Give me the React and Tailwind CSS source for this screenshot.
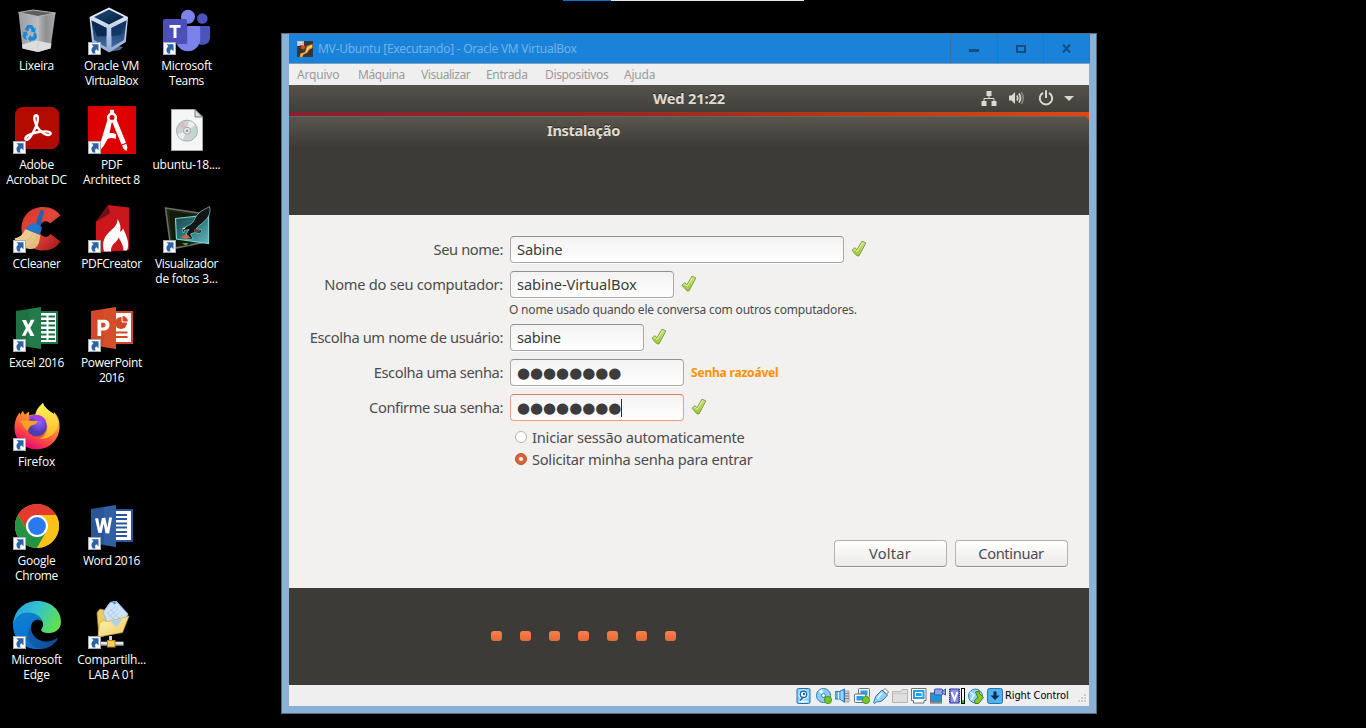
import React from "react";

/* ---------- desktop icons ---------- */

function Svg({ children, size = 48, box = 48, className = "" }) {
  return (
    <svg width={size} height={size} viewBox={`0 0 ${box} ${box}`} fill="none" className={`shrink-0 ${className}`}>
      {children}
    </svg>
  );
}

function Shortcut() {
  return (
    <g>
      <rect x="0" y="35" width="13" height="13" fill="#a7abb0" />
      <rect x="1" y="36" width="11" height="11" fill="#f6f8fa" />
      <path d="M3.500 37.300h7v7l-2.200-2c-1.300.8-1.500 2.200-.8 4.200H4.800c-2.100-3-1.500-5.500.7-7.200z" fill="#2c62a6" />
    </g>
  );
}

function BinIcon() {
  return (
    <Svg>
      <defs>
        <linearGradient id="bin" x1="0" x2="1">
          <stop offset="0" stopColor="#9b9d9f" /><stop offset=".5" stopColor="#b9bbbd" /><stop offset=".75" stopColor="#8d8f91" /><stop offset="1" stopColor="#a8aaac" />
        </linearGradient>
      </defs>
      <path d="M5.500 5.500 25 8.500 42.500 6 37.500 41.500 25 45 9.500 41.500z" fill="url(#bin)" />
      <path d="M5.500 5.500 20 3l22.500 3L25 9.500z" fill="#5d5f61" stroke="#b4b6b8" strokeWidth="1" />
      <path d="M9 37.500 23 33.500l15.500 3-1 5L25 45 9.500 41.500z" fill="#dcddde" />
      <path d="M25 9.500V45" stroke="#c8cacc" strokeWidth=".7" />
      <g fill="#1489dd">
        <path d="m11.500 22.500 3-4.500h4.500l2.500 3.500 1.300-.7-.8 5-4.500-1.500 1.300-.9-2-2.600-2 3.700z" />
        <path d="m20.500 26.500 2.500-1 1 5-2.500 3H18l-.2 1.500-3-3.500 3-3.500.2 1.800h2.500z" />
        <path d="m9.500 25 4-.5 1.500 3.800-1.300-.3-1 2 1.300 3-3-1-1.500-3.500 1-2.500z" />
      </g>
    </Svg>
  );
}

function VirtualBoxIcon() {
  return (
    <Svg>
      <defs>
        <linearGradient id="vb1" x1="0" y1="0" x2="1" y2="1"><stop stopColor="#1d4f86" /><stop offset="1" stopColor="#07182f" /></linearGradient>
        <linearGradient id="vb2" x1="0" y1="0" x2="0" y2="1"><stop stopColor="#eef5fd" /><stop offset="1" stopColor="#8ea9d0" /></linearGradient>
        <linearGradient id="vb3" x1="0" y1="0" x2="0" y2="1"><stop stopColor="#0d2c56" /><stop offset="1" stopColor="#426da5" /></linearGradient>
      </defs>
      <path d="M14 41l7 4 11-2 3-3-14-3z" fill="#4e6488" />
      <path d="M21 .5 40 10 37.800 35 21 45.500 4 35 1.500 10z" fill="url(#vb2)" />
      <path d="M21 2.500 36 10 21 17.500 6 10z" fill="url(#vb1)" />
      <path d="M3.500 13.500 18.500 21v19.500L6 33z" fill="url(#vb3)" />
      <path d="M38.500 13.500 23.500 21v19.500L36 33z" fill="url(#vb3)" />
      <path d="M3.500 13.500 18.500 21l-.2 8L9 29.500z" fill="#0b2850" />
      <path d="M38.500 13.500 23.500 21v8l9-1z" fill="#123765" />
      <Shortcut />
    </Svg>
  );
}

function TeamsIcon() {
  return (
    <Svg>
      <circle cx="39.300" cy="11.500" r="5.300" fill="#4a52bd" />
      <path d="M33 19h12.500c1 0 1.600.6 1.600 1.600V31a7.500 7.500 0 0 1-14 3z" fill="#4b53bc" />
      <circle cx="25" cy="9.800" r="7" fill="#7b83eb" />
      <path d="M13 19h22.500c1 0 1.700.8 1.700 1.700V33a12.300 12.300 0 0 1-24.500 0z" fill="#7b83eb" />
      <path d="M13 19h11.500v18H13z" fill="#5a61bd" opacity=".6" />
      <rect y="12" width="24" height="25" rx="1.700" fill="#4b4fb7" />
      <path d="M6.500 18h11v2.700h-4V31h-3V20.700h-4z" fill="#fff" />
      <Shortcut />
    </Svg>
  );
}

function AcrobatIcon() {
  return (
    <Svg>
      <rect x="2" y="1" width="44" height="42" rx="7.500" fill="#b30b00" />
      <path d="M23 9.300c2.500 0 2.500 4.500.6 9.500-2 5.300-5 11.500-8.200 14.200-1.700 1.500-3.600.7-3-.9.9-2.500 7.400-5.200 13.200-6.100 5.700-.9 11.400-.9 12 1.200.5 1.800-2.600 2.300-5.100 1.200-4-1.800-8-6.400-9.700-10.400-1.600-3.700-2.300-8.700.2-8.700z" stroke="#fff" strokeWidth="2.400" />
      <Shortcut />
    </Svg>
  );
}

function ArchitectIcon() {
  return (
    <Svg>
      <rect width="48" height="48" fill="#de0000" />
      <rect x="22" y="3.800" width="4" height="5" fill="#fff" />
      <circle cx="24" cy="11.500" r="3.800" stroke="#fff" strokeWidth="2.600" />
      <path d="m19.500 13.500 4.300 2.500L21.500 27c2.500-.3 5 .2 6.500 1v5c-3-1.500-6-1.200-8.200-.3L16 39.500l-4 5-.7-.3.700-6z" fill="#fff" />
      <path d="m28.500 13.500-4.300 2.500L33.500 38.500l4.500-1.800z" fill="#fff" />
      <path d="m34 39.500 4.300-1.700 1 3.500-.8 3.700-2.800-2z" fill="#fff" />
      <Shortcut />
    </Svg>
  );
}

function IsoIcon() {
  return (
    <Svg>
      <path d="M8.500 3.500H32l7.500 7.500v33.500h-31z" fill="#f5f6f6" stroke="#a5a7a9" />
      <path d="M32 3.500V11h7.500z" fill="#d8dadb" stroke="#77797b" />
      <circle cx="24" cy="24.700" r="10.500" fill="#cfd2d3" stroke="#a9acad" />
      <path d="m24 24.700-9-5a10 10 0 0 1 5-4.200z" fill="#d9bccb" />
      <path d="m24 24.700 9.500-2a10 10 0 0 1-.7 6.500z" fill="#b5dfc4" />
      <path d="m24 24.700 2-10a10 10 0 0 1 6 4z" fill="#eef0f0" />
      <path d="m24 24.700-4 9a10 10 0 0 1-5.500-5.500z" fill="#eceeee" />
      <circle cx="24" cy="24.700" r="3.500" fill="#e9ebeb" stroke="#a2a5a7" />
      <circle cx="24" cy="24.700" r="1.300" fill="#8f9294" />
    </Svg>
  );
}

function CCleanerIcon() {
  return (
    <Svg>
      <defs>
        <linearGradient id="cc" x1="0" y1="0" x2="1" y2="1"><stop stopColor="#d8342c" /><stop offset=".5" stopColor="#e0483a" /><stop offset="1" stopColor="#a31218" /></linearGradient>
        <linearGradient id="ccb" x1="0" y1="0" x2="1" y2="1"><stop stopColor="#f7e0b0" /><stop offset="1" stopColor="#e2b36c" /></linearGradient>
      </defs>
      <path d="M47.500 10.500 37 18.500c-2.500-3-6.500-3-9 .5-2.300 3.500-2 9 1 11.500 2.700 2.200 6 1.700 8.500-1.500l10 7.500c-4 6-10 9-17.500 9C17 45.500 8.500 35.500 8.500 23.500S17 2 30 2c8 0 13.500 3 17.500 8.500z" fill="url(#cc)" />
      <path d="M27 6.500c.7-2.500 4.200-1.700 3.800.8L27 22l-5-1z" fill="#1766b4" />
      <path d="M17 19.500c.7-1 2-1.500 3-1.200l7 2.500c1.500.7 2 2.200 1.600 3.700l-1.800 5.300-14.800-5z" fill="#2477c8" />
      <path d="m12.500 24.300 14.800 6-1 6c-1.500 6-5 8-9.300 7.700C9 43.300 4 40 1.500 33.500c5-1 8.500-4 11-9.200z" fill="url(#ccb)" />
      <path d="M6 33.500c4-1 7-3.500 9-7M10 38c5-2 8-5 10-10M17 43c4-3 6-7 7.500-13" stroke="#d5ab6b" strokeWidth=".6" />
      <Shortcut />
    </Svg>
  );
}

function PdfCreatorIcon() {
  return (
    <Svg>
      <path d="M20 0 41 2.500V45L8 47.500V17z" fill="#c8171d" />
      <path d="M20 0 22 8.500 8 17z" fill="#6f1013" />
      <path d="M22 8.500 8 17v30.500L41 45V20z" fill="#cc161c" />
      <path d="M16 46.500c-2.500-9 0-15.500 7.500-21.500 4.500-4 6-7 6-11 3 4.500 3.700 8.500 2.500 12.500 1.500-.3 2.500-1.300 3-3 4 8.500 7 15.500 4 22h-3.500c0-5-2.500-9-5-13-1 3-2.500 4-4.500 6-2.300 2.300-3.200 5-3 8z" fill="#fff" />
      <Shortcut />
    </Svg>
  );
}

function PhotoViewerIcon() {
  return (
    <Svg>
      <defs>
        <linearGradient id="pv" x1="0" y1="0" x2="1" y2="1"><stop stopColor="#1d4247" /><stop offset=".5" stopColor="#2e777f" /><stop offset="1" stopColor="#68b6bb" /></linearGradient>
      </defs>
      <path d="M2.500 3 42 9v28L8 44z" fill="#22280f" stroke="#6b6e70" strokeWidth="1.600" />
      <path d="M6 6 30 10 27 40 10 41z" fill="#131a09" />
      <path d="M19 38h7l-3.500 2.500z" fill="#64a514" />
      <path d="m12.500 13.500 33-3.500v28.500l-32-4.500z" fill="url(#pv)" stroke="#73d3da" strokeWidth="1.200" />
      <path d="M46.500 1.500c1.300 5 .2 9-3.500 13-3 3.300-5.500 5-8 7l-2 2.500 6 1-1.500 3.500-6-1-4 1.500 2.500 5-7 .5 2.500-3.500-2.500-2 3-4.500-4.500 1-1 2.500-1.500-3 3.500-3c5-2.500 7-3.500 9-7.500C34 8 40 5 44 3z" fill="#161513" stroke="#7adbe0" strokeWidth=".7" />
      <path d="m31 24 6.500 1-1 2.500-5.500-.5z" fill="#5f4a3a" />
      <path d="m17 33 6-4 5 4-5 1z" fill="#b96c4b" />
      <path d="m19 23 4-.5-2 2z" fill="#efe8d8" />
      <Shortcut />
    </Svg>
  );
}

function OfficePanel({ color, dark, letter }) {
  return (
    <>
      <path d="M3 7 28 3v42L3 41z" fill={color} />
      <path d="M16 5 28 3v42l-12-2z" fill={dark} opacity=".35" />
      {letter}
      <Shortcut />
    </>
  );
}

function ExcelIcon() {
  return (
    <Svg>
      <path d="M27 8h17v31H27z" fill="#fff" stroke="#207245" strokeWidth="2" />
      <path d="M28 12.500h5.500M28 17h5.500M28 21.500h5.500M28 26h5.500M28 30.500h5.500M28 35h5.500M35.500 12.500H42M35.500 17H42M35.500 21.500H42M35.500 26H42M35.500 30.500H42M35.500 35H42" stroke="#207245" strokeWidth="2" />
      <OfficePanel color="#207245" dark="#2b8a55" letter={<path d="M9 16h4l2.300 5 2.500-5.300h3.900l-4.400 8.200L21.500 32h-4l-2.600-5.200-2.400 5H8.800l4.100-7.800z" fill="#fff" />} />
    </Svg>
  );
}

function PowerPointIcon() {
  return (
    <Svg>
      <path d="M27 8h17v31H27z" fill="#fff" stroke="#d24726" strokeWidth="2" />
      <circle cx="33" cy="19" r="6" fill="#d24726" />
      <path d="M34 11.500V18h6.500a6.500 6.500 0 0 0-6.500-6.500z" fill="#d24726" stroke="#fff" />
      <path d="M28 28.500h11.500M28 33h11.500" stroke="#d24726" strokeWidth="2" />
      <OfficePanel color="#d24726" dark="#dc5b33" letter={<path fillRule="evenodd" d="M9.500 15.800h6.300c3.800 0 5.700 2 5.700 5.100 0 3.600-2.600 5.600-6.300 5.500h-2V32H9.500zm3.700 3v4.700h1.700c1.800 0 2.700-.8 2.700-2.400 0-1.500-.9-2.300-2.600-2.300z" fill="#fff" />} />
    </Svg>
  );
}

function WordIcon() {
  return (
    <Svg>
      <path d="M27 8h17v31H27z" fill="#fff" stroke="#2a5699" strokeWidth="2" />
      <path d="M28 13h11M28 17h11M28 21.500h11M28 25.500h11M28 30h11M28 34h11" stroke="#2a5699" strokeWidth="2" />
      <OfficePanel color="#2a5699" dark="#3f6fb5" letter={<path d="m7 16.500 3.200-.2 1.700 9.500 2-9.800 3.400-.2 2.100 10 1.700-10.200 3-.2-3 16-3.500-.2-2-9.500-2 9.300-3.300-.2z" fill="#fff" />} />
    </Svg>
  );
}

function FirefoxIcon() {
  return (
    <Svg>
      <defs>
        <linearGradient id="ff" x1=".8" y1="0" x2=".3" y2="1"><stop stopColor="#fff34f" /><stop offset=".35" stopColor="#ffa52b" /><stop offset=".7" stopColor="#ff4a40" /><stop offset="1" stopColor="#e5007d" /></linearGradient>
        <linearGradient id="ffy" x1=".5" y1="0" x2=".5" y2="1"><stop stopColor="#fff45a" /><stop offset="1" stopColor="#ffb42b" /></linearGradient>
        <radialGradient id="ffp" cx=".6" cy=".3"><stop stopColor="#9a5cff" /><stop offset=".6" stopColor="#7048d8" /><stop offset="1" stopColor="#4a3fa8" /></radialGradient>
      </defs>
      <path d="M10 7.500c.5 2 1 3 2 4l4-3v4c2-1 4-1 6-1L30 0c1 4 5 7.500 9 10l2 1c0-1-.3-2-.5-2.500C45 13 47 18 46.500 25c-.7 12-10 21.300-22.500 21.300S1.500 37.500 1.500 25C1.500 18 4 12 7 9.500V12z" fill="url(#ff)" />
      <path d="M30 0c-5 4-7.500 8-7.500 12 7 0 12 5 12 12 0 5-3 10-8 12 10 0 18-6 19-16-1-5-2.500-6-6-10-4-2.500-8.500-6-9.500-10z" fill="url(#ffy)" />
      <circle cx="23.700" cy="23.300" r="10.200" fill="url(#ffp)" />
      <path d="M15 15c2-3 8-4 12-2.500 3 1 6 4 6 6-3-2-4-2-6-2z" fill="#a63ee0" />
      <path d="M7 18c4-1 9-1 11.500 0h6c.5 2-2.500 3.500-6 4.500-1.500 1-3.500 3-3.500 5.500C11 26 10 21 7 18z" fill="#ffa01e" />
      <Shortcut />
    </Svg>
  );
}

function ChromeIcon() {
  return (
    <Svg>
      <circle cx="24" cy="24" r="22" fill="#fbc116" />
      <path d="M4.950 13A22 22 0 0 1 43.050 13H24L14.500 29.500z" fill="#e33b2e" />
      <path d="M4.950 13A22 22 0 0 0 24 46l9.500-16.500L14.500 29.500z" fill="#229342" />
      <path d="M33.500 29.500 24 46A22 22 0 0 0 43.050 13H24z" fill="#fbc116" />
      <circle cx="24" cy="24" r="11" fill="#fff" />
      <circle cx="24" cy="24" r="8.900" fill="#2a79f0" />
      <Shortcut />
    </Svg>
  );
}

function EdgeIcon() {
  return (
    <Svg>
      <defs>
        <linearGradient id="e1" x1="0" y1=".2" x2="1" y2=".6"><stop stopColor="#2aa0e0" /><stop offset=".45" stopColor="#33c3cf" /><stop offset="1" stopColor="#62e04e" /></linearGradient>
        <linearGradient id="e2" x1=".2" y1="0" x2=".5" y2="1"><stop stopColor="#0d80d0" /><stop offset="1" stopColor="#0a70cc" /></linearGradient>
        <linearGradient id="e3" x1="0" y1="0" x2="1" y2="0"><stop stopColor="#1160b2" /><stop offset="1" stopColor="#0b4a94" /></linearGradient>
      </defs>
      <path d="M0 24C1 9 11 0 24.500 0 38 0 48 9.500 48 20.500 48 28 42.500 32 36.500 32c-5.500 0-9.500-1.500-8-4 3-4 1.500-8.500-2-11C20 12 6 12 0 24z" fill="url(#e1)" />
      <path d="M0 24c1.500-8 8-12.500 15-12.500 7.500 0 13 4 14.500 9-5-3.500-10.500-1.500-11.500 5-1.500 10 5 20.500 13 21.500-3 1-5.500 1-7 1C10.500 48 0 37.500 0 24z" fill="url(#e2)" />
      <path d="M18 25c-1 9 7 16 16.500 15.500 4-.2 7-1.800 9-3.200.9-.6 1.700.2 1 1.200C41.500 43.500 35 48 28 48 19 47 13.500 40 14.500 33c.4-3.500 1.700-6.300 3.500-8z" fill="url(#e3)" />
      <Shortcut />
    </Svg>
  );
}

function SharedFolderIcon() {
  return (
    <Svg>
      <defs>
        <linearGradient id="sf" x1="0" y1="0" x2="1" y2="1"><stop stopColor="#fff2b5" /><stop offset="1" stopColor="#f2cb5c" /></linearGradient>
      </defs>
      <path d="M9 11.500 12 8l6 1.500L19 14l-3 21-5 1z" fill="#eecb60" stroke="#c59a2f" strokeWidth=".6" />
      <path d="M15 11.500 22 1.500 28 0l12 13-4 8-17 0z" fill="#cfe3fb" stroke="#8fb6e6" />
      <path d="m19 13 9-8m-7 11 9-8m-7 11 9-8m-7 11 9-8M22 8l12 13M19 11l12 13" stroke="#a3c4ee" strokeWidth=".7" />
      <path d="m24 1 5 .5-2.500 2z" fill="#2f86da" />
      <path d="m11.500 22.500 4-3 5 1L41 15l-6.500 16.500L10 36z" fill="url(#sf)" stroke="#d2a53a" strokeWidth=".7" />
      <path d="m23 20.500 12-3-7 9z" fill="#a9d2f4" />
      <path d="M22.500 35v5" stroke="#cfd3d6" strokeWidth="3" />
      <path d="M11 42.500h24.500" stroke="#e4e7e9" strokeWidth="3.600" />
      <path d="M11 44h24.500" stroke="#8f9498" strokeWidth="1.200" />
      <rect x="19.500" y="39.500" width="7.500" height="6.500" fill="#f6cf57" stroke="#b48a25" />
      <Shortcut />
    </Svg>
  );
}

const columns = [
  [
    [BinIcon, [["Lixeira", "tracking-[-0.3px]"]]],
    [AcrobatIcon, [["Adobe", "tracking-[-0.3px]"], ["Acrobat DC", "tracking-[-0.25px]"]]],
    [CCleanerIcon, [["CCleaner", "tracking-[-0.3px]"]]],
    [ExcelIcon, [["Excel 2016", "tracking-[-0.4px]"]]],
    [FirefoxIcon, [["Firefox", "tracking-[-0.2px]"]]],
    [ChromeIcon, [["Google", "tracking-[-0.2px]"], ["Chrome", "tracking-[-0.3px]"]]],
    [EdgeIcon, [["Microsoft", "tracking-[-0.25px]"], ["Edge", "tracking-[-0.2px]"]]],
  ],
  [
    [VirtualBoxIcon, [["Oracle VM", "tracking-[-0.25px]"], ["VirtualBox", "tracking-[-0.45px]"]]],
    [ArchitectIcon, [["PDF", "tracking-[-0.3px]"], ["Architect 8", "tracking-[-0.25px]"]]],
    [PdfCreatorIcon, [["PDFCreator", "tracking-[-0.4px]"]]],
    [PowerPointIcon, [["PowerPoint", "tracking-[-0.35px]"], ["2016", "tracking-[-0.6px]"]]],
    [null, []],
    [WordIcon, [["Word 2016", "tracking-[-0.45px]"]]],
    [SharedFolderIcon, [["Compartilh...", "tracking-[-0.25px]"], ["LAB A 01", "tracking-[-0.35px]"]]],
  ],
  [
    [TeamsIcon, [["Microsoft", "tracking-[-0.25px]"], ["Teams", "tracking-[-0.4px]"]]],
    [IsoIcon, [["ubuntu-18....", "tracking-[-0.25px]"]]],
    [PhotoViewerIcon, [["Visualizador", "tracking-[-0.4px]"], ["de fotos 3...", "tracking-[-0.2px]"]]],
  ],
];

function Desktop() {
  return (
    <div className="flex w-[225px] shrink-0 text-white font-['Open_Sans','Noto_Sans',sans-serif] text-[12px] leading-[15px]">
      {columns.map((col, c) => (
        <div key={c} className="w-[75px]">
          {col.map(([Icon, lines], r) => (
            <div key={r} className="flex h-[99px] w-[74px] flex-col items-center pt-[7px]">
              {Icon && <Icon />}
              <div className="mt-[3px] mr-px flex flex-col items-center whitespace-nowrap">
                {lines.map(([t, tr]) => (
                  <span key={t} className={tr}>{t}</span>
                ))}
              </div>
            </div>
          ))}
        </div>
      ))}
    </div>
  );
}

/* ---------- window chrome ---------- */

function VmIcon() {
  return (
    <Svg size={16} box={16}>
      <rect width="16" height="16" fill="#35353b" />
      <path d="M2.500 16 3.500 12.500l4.500-1.500 2-6L15.500 3v4l-3 1.500L10 12l-3.500 1.500L5.500 16z" fill="#f59b23" />
      <path d="m4 15 1-2.500 3.500-.8 2-5L15 4v2l-3.500 1.500-2 3.500-3.500 1.500z" fill="#fde08a" />
      <path d="M3.500 6.500 6 4l2.500 1L7.500 8l-2 .5z" fill="#e8480c" />
      <path d="M0 0h7v4.500H3V5H0z" fill="#b9bcc3" />
      <path d="M1.500 1.500h4M1.500 3h3" stroke="#fff" strokeDasharray="1 1" />
    </Svg>
  );
}

function TitleBar() {
  return (
    <div className="flex h-[30px] w-[801px] border-b border-[#7f9db5] bg-[#1a83d9]">
      <div className="flex flex-1 items-center pl-[8px]">
        <VmIcon />
        <span className="ml-[5px] whitespace-nowrap text-[12px] leading-[16px] tracking-[-0.26px] text-[#6fb3ec]">
          MV-Ubuntu [Executando] - Oracle VM VirtualBox
        </span>
      </div>
      <div className="flex w-[47px] items-center justify-center border-l border-[#3573a5]">
        <div className="mt-[4px] h-[3px] w-[10px] bg-[#104e85]" />
      </div>
      <div className="flex w-[46px] items-center justify-center border-l border-[#3573a5]">
        <div className="h-[8px] w-[10px] border-2 border-[#104e85]" />
      </div>
      <div className="flex w-[47px] items-center justify-center border-x border-[#3573a5]">
        <Svg size={9} box={9}>
          <path d="m1 .5 7 8M8 .5l-7 8" stroke="#104e85" strokeWidth="2" />
        </Svg>
      </div>
    </div>
  );
}

function MenuBar() {
  return (
    <div className="flex h-[21px] items-center bg-[#efefef] pl-[8px] text-[12px] leading-[15px] text-[#9b9b9b]">
      <span className="w-[61px] tracking-[-0.2px]">Arquivo</span>
      <span className="w-[63px] tracking-[-0.4px]">Máquina</span>
      <span className="w-[65px] tracking-[-0.45px]">Visualizar</span>
      <span className="w-[59px] tracking-[-0.35px]">Entrada</span>
      <span className="w-[79px] tracking-[-0.35px]">Dispositivos</span>
      <span className="tracking-[-0.2px]">Ajuda</span>
    </div>
  );
}

/* ---------- guest screen ---------- */

function TopBar() {
  return (
    <div className="grid h-[27px] grid-cols-[1fr_auto_1fr] items-center bg-linear-to-b from-[#55524a] to-[#403f3a] pb-[2px]">
      <div />
      <span className="text-[14.670px] leading-[20px] font-bold tracking-[-0.15px] text-[#dfdbd2] [text-shadow:0_-1px_0_#2b2a27]">Wed 21:22</span>
      <div className="flex items-center justify-end pr-[14px]">
        <Svg size={16} box={16} className="mr-[12px]">
          <path d="M5.500 1h5v5h-5zM.5 11h5v5h-5zM10.500 11h5v5h-5z" fill="#dcd8d0" />
          <path d="M8 6v3M3 11V8.500h10V11" stroke="#dcd8d0" />
        </Svg>
        <Svg size={16} box={16} className="mr-[13px]">
          <path d="M0 5.500h2.500L6 2v12l-3.500-3.500H0z" fill="#dcd8d0" />
          <path d="M8 5.500q1.500 2.500 0 5" stroke="#dcd8d0" strokeWidth="1.800" />
          <path d="M10 3.500q3 4.500 0 9" stroke="#dcd8d0" strokeWidth="1.800" />
          <path d="M12.300 2q4 6 0 12" stroke="#858279" strokeWidth="1.800" />
        </Svg>
        <Svg size={16} box={16} className="mr-[9px]">
          <path d="M5 2.800a6.200 6.200 0 1 0 6 0" stroke="#dcd8d0" strokeWidth="2" />
          <path d="M8 .3V8" stroke="#dcd8d0" strokeWidth="2" />
        </Svg>
        <Svg size={12} box={12} className="mt-px">
          <path d="M1 4h10L6 9z" fill="#dcd8d0" />
        </Svg>
      </div>
    </div>
  );
}

function Check() {
  return (
    <Svg size={18} box={18}>
      <defs>
        <linearGradient id="ck" x1="0" y1="0" x2="0" y2="1"><stop stopColor="#d3e87c" /><stop offset="1" stopColor="#9cc437" /></linearGradient>
      </defs>
      <path d="m2 10.300 2.800-2.600 2.200 2 5-8.500 3.800 1.700-6.800 13H7z" fill="url(#ck)" stroke="#7ba046" strokeWidth="1" strokeLinejoin="round" />
      <path d="m3.600 10.300 1.200-1.200 2.300 2.200 5.300-8.600" stroke="#eaf5b8" strokeWidth=".8" />
    </Svg>
  );
}

const inputLook =
  "flex h-[27px] items-center rounded-[4px] border bg-linear-to-b from-[#f3f3f3] to-white pb-[2px] pl-[6px] text-[14.670px] leading-[20px] text-[#3c3c3c]";

function Field({ label, labelClass = "", width, focus = false, after, children }) {
  return (
    <div className="flex h-[27px] items-center">
      <label className={`mb-[2px] w-[214px] text-right whitespace-nowrap ${labelClass}`}>{label}</label>
      <div
        className={`${inputLook} ml-[7px] ${width} ${
          focus
            ? "border-[#e8a286] border-t-[#dd8059] shadow-[0_1px_0_#fbe9e2]"
            : "border-[#a9a9a7] border-t-[#8f9090] shadow-[0_1px_0_#fbfbfb]"
        }`}
      >
        {children}
      </div>
      <div className="mb-[2px] ml-[6px] flex items-center">{after}</div>
    </div>
  );
}

function Dots() {
  return <span className="mt-[3px] font-['DejaVu_Sans',sans-serif] text-[15px] tracking-[-0.05px]">●●●●●●●●</span>;
}

function Radio({ on = false, className = "", children }) {
  return (
    <div className="flex h-[22px] items-center pl-[226px]">
      <div
        className={`mb-[1px] flex h-[12px] w-[12px] items-center justify-center rounded-full border ${
          on ? "border-[#b5532f] bg-[#dc6136]" : "border-[#b5b4b2] bg-white"
        }`}
      >
        {on && <div className="h-[4px] w-[4px] rounded-full bg-white" />}
      </div>
      <span className={`ml-[5px] whitespace-nowrap ${className}`}>{children}</span>
    </div>
  );
}

function Button({ className = "", children }) {
  return (
    <button
      className={`h-[27px] w-[113px] rounded-[4px] border border-[#b3b2b0] border-b-[#93928f] bg-linear-to-b from-white to-[#eceae8] pr-px pb-px text-[14.670px] leading-[20px] shadow-[0_1px_0_#fafafa] ${className}`}
    >
      {children}
    </button>
  );
}

function Installer() {
  return (
    <div className="bg-[linear-gradient(90deg,#86202f,#9c2820_45%,#b53a15_70%,#dd4814)] pt-[4px]">
      <div className="flex h-[99px] flex-col rounded-tr-[6px] bg-[#3d3b37]">
        <div className="h-[30px] rounded-tr-[6px] border-t border-[#67655c] bg-linear-to-b from-[#59564e] to-[#3e3c38]">
          <div className="w-[589px] pt-[3px] text-center text-[14.670px] leading-[20px] font-bold tracking-[-0.35px] text-[#dfdbd2] [text-shadow:0_-1px_0_#2b2a27]">
            Instalação
          </div>
        </div>
      </div>
      <form className="flex h-[373px] flex-col bg-[#f2f1f0] pt-[21px] text-[14.670px] leading-[20px] text-[#4c4c4c]">
        <div className="flex flex-col gap-[8px]">
          <Field label="Seu nome:" labelClass="tracking-[-0.4px]" width="w-[334px]" after={<Check />}>
            <span className="tracking-[-0.15px]">Sabine</span>
          </Field>
          <Field label="Nome do seu computador:" labelClass="tracking-[-0.26px]" width="w-[164px]" after={<Check />}>
            <span className="tracking-[-0.08px]">sabine-VirtualBox</span>
          </Field>
        </div>
        <div className="h-[26px] pl-[220px] pt-[2px] text-[12px] tracking-[-0.19px]">
          O nome usado quando ele conversa com outros computadores.
        </div>
        <div className="flex flex-col gap-[8px]">
          <Field label="Escolha um nome de usuário:" labelClass="tracking-[-0.37px]" width="w-[134px]" after={<Check />}>
            <span className="tracking-[-0.25px]">sabine</span>
          </Field>
          <Field
            label="Escolha uma senha:"
            labelClass="tracking-[-0.39px]"
            width="w-[174px]"
            after={<span className="ml-[1px] mt-[2px] text-[12px] font-bold tracking-[-0.2px] whitespace-nowrap text-[#ff9000]">Senha razoável</span>}
          >
            <Dots />
          </Field>
          <Field label="Confirme sua senha:" labelClass="tracking-[-0.4px]" width="w-[174px]" focus after={<Check />}>
            <Dots />
            <span className="mt-[2px] h-[18px] w-px bg-[#2c2c2c]" />
          </Field>
        </div>
        <div className="flex flex-col pt-[5px]">
          <Radio className="tracking-[-0.22px]">Iniciar sessão automaticamente</Radio>
          <Radio on className="tracking-[-0.27px]">Solicitar minha senha para entrar</Radio>
        </div>
        <div className="mt-auto mb-[21px] flex justify-end gap-[8px] pr-[21px]">
          <Button className="tracking-[0.2px]">Voltar</Button>
          <Button className="tracking-[-0.35px]">Continuar</Button>
        </div>
      </form>
      <div className="flex h-[97px] gap-[18px] bg-[#3d3b37] pt-[43px] pl-[202px]">
        {[0, 1, 2, 3, 4, 5, 6].map((i) => (
          <div key={i} className="h-[10px] w-[11px] rounded-[3px] bg-linear-to-b from-[#f58050] to-[#e66a33]" />
        ))}
      </div>
    </div>
  );
}

/* ---------- status bar ---------- */

function StatusBar() {
  return (
    <div className="flex h-[21px] items-center justify-end bg-[#efefef] pr-[2px]">
      <div className="mt-px flex gap-[3px]">
        <Svg size={16} box={16} className="mr-px">
          <rect x="1" y=".5" width="13" height="15" rx="1.500" fill="#8fd0f8" stroke="#1f6db5" />
          <circle cx="7.500" cy="6.500" r="5" fill="#fff" />
          <path d="M3.500 13.500h8" stroke="#fff" strokeWidth="2" />
          <circle cx="7.500" cy="6.300" r="3.300" stroke="#1d6fb8" strokeWidth="1.500" />
          <circle cx="8" cy="6" r="1.200" fill="#1d5fa8" />
          <path d="m4 12.500 3.500-3.500" stroke="#1d5fa8" strokeWidth="1.500" />
        </Svg>
        <Svg size={16} box={16}>
          <circle cx="7.500" cy="7.500" r="7" fill="#8ccdf5" stroke="#2a7cbf" />
          <path d="m7.500 7.500-5-4a7 7 0 0 1 4-2.500z" fill="#e4f6ff" />
          <circle cx="7.500" cy="7.500" r="2" fill="#fff" stroke="#2a7cbf" />
          <circle cx="12" cy="12" r="3.700" fill="#76c32b" stroke="#3f8a12" strokeWidth=".7" />
        </Svg>
        <Svg size={16} box={16}>
          <path d="M9 3h5v11H8" fill="#c9c9c9" stroke="#a8a8a8" />
          <path d="M10 5.500h4M10 8h4M10 10.500h4" stroke="#8c8c8c" />
          <path d="M0 3.500h4.500l5-2.500v13l-5-3H0z" fill="#5fb9f0" stroke="#2677ba" />
          <path d="M3.500 4v7M7 3v9" stroke="#d7f0fd" />
        </Svg>
        <Svg size={16} box={16}>
          <rect x="4.500" y=".5" width="11" height="9" rx="1" fill="#eaf6fd" stroke="#6c7174" />
          <rect x="6.500" y="2.500" width="7" height="5" fill="#2b9de0" />
          <rect x=".5" y="6" width="11" height="8.500" rx="1" fill="#f5fbfe" stroke="#6c7174" />
          <rect x="2.500" y="8" width="7" height="4.500" fill="#2b9de0" />
          <circle cx="12" cy="12" r="3.700" fill="#76c32b" stroke="#3f8a12" strokeWidth=".7" />
        </Svg>
        <Svg size={16} box={16}>
          <path d="m10 2.500 2-2 3.500 3.500-2 2.500z" fill="#fff" stroke="#6f7c88" />
          <path d="M4 7 9 2l5.500 5L10 12c-3 2.500-5 1.500-6.500 2L1.500 15.500.5 14.500C2 12 1.500 9.500 4 7z" fill="#8fd0f8" stroke="#2b75b3" />
          <path d="M4.500 11C5 8.500 7 7 9 5" stroke="#e8f7ff" strokeWidth="1.500" />
        </Svg>
        <Svg size={16} box={16}>
          <path d="M.5 3.500h8l1.500-2h5.500v13H.5z" fill="#dedede" stroke="#b4b4b4" />
          <path d="M1 5.500h14" stroke="#c6c6c6" />
        </Svg>
        <Svg size={16} box={16}>
          <path d="M.5.500h14.500v12h-2v2.500H2.500v-2.500h-2z" fill="#fff" stroke="#6c7174" />
          <rect x="2" y="2" width="11.500" height="9" fill="#2b9de0" />
          <rect x="4.500" y="4.500" width="6.500" height="4" fill="#2b9de0" stroke="#fff" />
        </Svg>
        <Svg size={16} box={16}>
          <rect x=".5" y="5" width="11" height="9" fill="#1f95dc" stroke="#6c7174" />
          <path d="M0 15h12" stroke="#5d6266" />
          <rect x="4.500" y="1" width="8" height="6" rx="1" fill="#8ba4e8" stroke="#3a4fae" />
          <path d="m12 3.500 3.500-2.500v6L12 5z" fill="#8ba4e8" stroke="#3a4fae" />
        </Svg>
        <Svg size={16} box={16}>
          <rect x="1" y="1" width="9" height="14" fill="#8a8fe8" stroke="#34349d" />
          <path d="M.5 1v14M10.500 1v14" stroke="#34349d" strokeDasharray="1 1" />
          <path d="m2.500 4 3 7.500 3-7.500" stroke="#fff" strokeWidth="2" />
          <rect x="12.500" y=".5" width="3" height="15" fill="#fff" stroke="#000" />
          <path d="M13 12h2v3h-2z" fill="#20d41f" />
        </Svg>
        <Svg size={16} box={16}>
          <circle cx="7.500" cy="8" r="7" fill="#8ed1f8" stroke="#3a7fb8" />
          <path d="m2 4 4 3-3 5" stroke="#e8f7ff" strokeWidth="1.500" />
          <path d="m7.500 4 3.500-1 .5 2.500 4 4-5 6H7l-.5-3 3.500-3z" fill="#86c92f" stroke="#467f1c" />
        </Svg>
        <Svg size={16} box={16}>
          <rect x=".5" y=".5" width="15" height="15" rx="2" fill="#4eb3ee" stroke="#2a74ae" />
          <path d="M6.500 3.500h3v4h3L8 12 3.500 7.500h3z" fill="#0a2c55" />
        </Svg>
      </div>
      <span className="ml-[2px] w-[72px] text-[11px] leading-[15px] whitespace-nowrap text-black font-['DejaVu_Sans_Condensed','DejaVu_Sans',sans-serif] [font-stretch:condensed] tracking-[-0.1px]">
        Right Control
      </span>
      <Svg size={10} box={10} className="mt-[7px]">
        <path d="M7 1h2M4 4h2M7 4h2M1 7h2M4 7h2M7 7h2" stroke="#c4c4c4" strokeWidth="1.600" />
      </Svg>
    </div>
  );
}

export default function App() {
  return (
    <div className="flex h-[728px] w-[1366px] overflow-hidden bg-black">
      <Desktop />
      <div className="flex flex-col">
        <div className="flex h-[33px] pl-[338px]">
          <div className="h-px w-[48px] bg-[#0078d7]" />
          <div className="h-px w-[193px] bg-[#e6e6e6]" />
        </div>
        <div className="ml-[56px] w-[816px] border border-[#5b6d7c] bg-[#8ab2d6] pr-[6px] pb-[7px] pl-[7px] font-['Noto_Sans',sans-serif]">
          <TitleBar />
          <div className="w-[800px]">
            <MenuBar />
            <TopBar />
            <Installer />
            <StatusBar />
          </div>
        </div>
      </div>
    </div>
  );
}
